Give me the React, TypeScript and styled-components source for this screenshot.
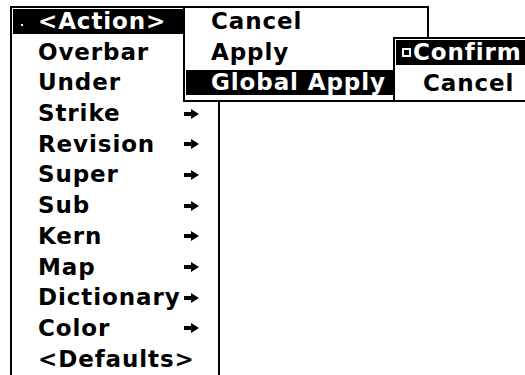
import styled, { createGlobalStyle } from "styled-components";

const GlobalStyle = createGlobalStyle`
    html, body {
        margin: 0;
        background: #fff;
        overflow: hidden;
    }
`;

const Screen = styled.div({
    position: 'relative',
    width: 525,
    height: 375,
    overflow: 'hidden',
    boxSizing: 'border-box',
    padding: '6px 0 0 10px',
    background: '#fff',
    fontFamily: '"DejaVu Sans", "Liberation Sans", sans-serif',
    fontWeight: 700,
    fontSize: 23,
    letterSpacing: '0.9px',
    color: '#000',
});

const MainMenu = styled.div({
    position: 'relative',
    width: 210,
    boxSizing: 'border-box',
    border: '2px solid #000',
    borderBottom: 'none',
    background: '#fff',
});

const PopupMenu = styled.div<{ $left: number; $top: number; $width: number }>(
    ({ $left, $top, $width }) => ({
        position: 'absolute',
        left: $left,
        top: $top,
        width: $width,
        boxSizing: 'border-box',
        border: '2px solid #000',
        background: '#fff',
    })
);

const Row = styled.div<{ $height: number }>(({ $height }) => ({
    height: $height,
    boxSizing: 'border-box',
    paddingTop: 1,
}));

const Band = styled.div<{ $selected?: boolean; $indent: number; $right: number }>(
    ({ $selected, $indent, $right }) => ({
        position: 'relative',
        display: 'flex',
        alignItems: 'center',
        height: 25,
        lineHeight: '25px',
        margin: '0 1px',
        paddingLeft: $indent,
        paddingRight: $right,
        whiteSpace: 'nowrap',
        background: $selected ? '#000' : 'transparent',
        color: $selected ? '#fff' : '#000',
    })
);

const Label = styled.span({
    flex: 1,
});

const Dot = styled.span({
    position: 'absolute',
    left: 8,
    top: 15,
    width: 2,
    height: 2,
    background: '#fff',
});

const CheckBox = styled.span({
    display: 'inline-block',
    width: 9,
    height: 9,
    boxSizing: 'border-box',
    border: '2px solid #fff',
    marginRight: 2,
    flexShrink: 0,
});

const Arrow = () => (
    <svg width="15" height="10" viewBox="0 0 15 10">
        <path d="M0 3 H7 V0 L15 5 L7 10 V7 H0 Z" fill="#000" />
    </svg>
);

type ItemProps = {
    label: string;
    height: number;
    selected?: boolean;
    arrow?: boolean;
    mark?: boolean;
    check?: boolean;
    indent?: number;
    right?: number;
};

const MenuItem = ({ label, height, selected, arrow, mark, check, indent = 25, right = 18 }: ItemProps) => (
    <Row $height={height}>
        <Band $selected={selected} $indent={indent} $right={right}>
            {mark && <Dot />}
            {check && <CheckBox />}
            <Label>{label}</Label>
            {arrow && <Arrow />}
        </Band>
    </Row>
);

const mainItems: { label: string; arrow?: boolean }[] = [
    { label: 'Overbar' },
    { label: 'Under' },
    { label: 'Strike', arrow: true },
    { label: 'Revision', arrow: true },
    { label: 'Super', arrow: true },
    { label: 'Sub', arrow: true },
    { label: 'Kern', arrow: true },
    { label: 'Map', arrow: true },
    { label: 'Dictionary', arrow: true },
    { label: 'Color', arrow: true },
    { label: '<Defaults>' },
];

const App = () => {
    return <>
        <GlobalStyle />
        <Screen>
            <MainMenu>
                <MenuItem label="<Action>" height={30.7} selected mark />
                {mainItems.map((item) => (
                    <MenuItem key={item.label} label={item.label} height={30.7} arrow={item.arrow} />
                ))}
                <PopupMenu $left={171} $top={-2} $width={246}>
                    <MenuItem label="Cancel" height={30.5} />
                    <MenuItem label="Apply" height={30.5} />
                    <MenuItem label="Global Apply" height={30.5} selected />
                    <PopupMenu $left={208} $top={29} $width={200}>
                        <MenuItem label="Confirm" height={30.5} selected check indent={6} />
                        <MenuItem label="Cancel" height={30.5} indent={27} />
                    </PopupMenu>
                </PopupMenu>
            </MainMenu>
        </Screen>
    </>;
};

export default App;
